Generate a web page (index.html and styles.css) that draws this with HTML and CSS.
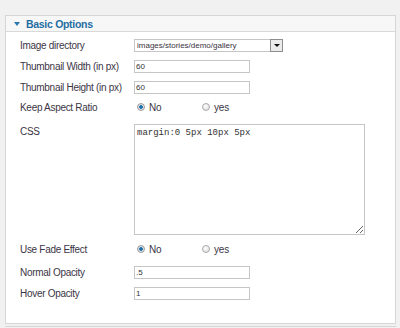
FILE: index.html
```html
<!DOCTYPE html>
<html lang="en">
<head>
    <meta charset="UTF-8">
    <title>Basic Options</title>
    <link rel="stylesheet" href="styles.css">
</head>
<body>
    <div class="panel">
        <div class="panel-head">
            <span class="arrow"></span>
            <h3>Basic Options</h3>
        </div>
        <div class="panel-body">
            <div class="row">
                <label class="key">Image directory</label>
                <div class="select">
                    <span class="select-text">images/stories/demo/gallery</span>
                    <span class="select-btn"><span class="caret"></span></span>
                </div>
            </div>
            <div class="row">
                <label class="key">Thumbnail Width (in px)</label>
                <input class="text" type="text" value="60">
            </div>
            <div class="row short">
                <label class="key">Thumbnail Height (in px)</label>
                <input class="text" type="text" value="60">
            </div>
            <div class="row short">
                <label class="key">Keep Aspect Ratio</label>
                <div class="radios">
                    <span class="option"><span class="radio checked"></span>No</span>
                    <span class="option"><span class="radio"></span>yes</span>
                </div>
            </div>
            <div class="row area-row">
                <label class="key">CSS</label>
                <textarea class="area">margin:0 5px 10px 5px</textarea>
            </div>
            <div class="row short">
                <label class="key">Use Fade Effect</label>
                <div class="radios">
                    <span class="option"><span class="radio checked"></span>No</span>
                    <span class="option"><span class="radio"></span>yes</span>
                </div>
            </div>
            <div class="row spaced">
                <label class="key">Normal Opacity</label>
                <input class="text" type="text" value=".5">
            </div>
            <div class="row">
                <label class="key">Hover Opacity</label>
                <input class="text" type="text" value="1">
            </div>
        </div>
    </div>
    <div class="panel next"></div>
</body>
</html>
```

FILE: styles.css
```css
body {
    margin: 0;
    background-color: #f1f1f1;
    font-family: "Liberation Sans", Arial, sans-serif;
    height: 328px;
    overflow: hidden;
}
.panel {
    margin: 15px 4px 0 5px;
    border: 1px solid #d6d6d6;
    background-color: #fff;
}
.panel.next {
    margin-top: 2px;
    height: 0;
    border-bottom: none;
}
.panel-head {
    display: flex;
    align-items: center;
    height: 15px;
    padding-left: 8px;
    background-color: #f7f7f7;
    border-bottom: 1px solid #d9d9d9;
}
.arrow {
    width: 0;
    height: 0;
    border-left: 3px solid transparent;
    border-right: 3px solid transparent;
    border-top: 4px solid #2a78ad;
    margin-right: 6px;
    margin-top: 1px;
}
.panel-head h3 {
    margin: 0;
    font-size: 10.5px;
    letter-spacing: -0.3px;
    color: #1f6ea3;
    font-weight: bold;
}
.panel-body {
    padding: 3px 14px 19px 14px;
}
.row {
    display: flex;
    align-items: center;
    height: 21px;
}
.row.short {
    height: 20px;
}
.row.spaced {
    margin-top: 3px;
}
.key {
    width: 114px;
    flex: none;
    font-size: 10px;
    letter-spacing: -0.3px;
    color: #3b3545;
}
.text {
    box-sizing: border-box;
    width: 116px;
    height: 13px;
    margin: 0;
    padding: 0 1px;
    border: 1px solid #c6c6c6;
    font-family: "Liberation Sans", Arial, sans-serif;
    font-size: 8px;
    color: #333;
    outline: none;
}
.select {
    box-sizing: border-box;
    display: flex;
    align-items: center;
    width: 149px;
    height: 13px;
    border: 1px solid #c6c6c6;
    background-color: #fff;
}
.select-text {
    flex: 1;
    padding-left: 2px;
    font-size: 8px;
    color: #3a3340;
}
.select-btn {
    box-sizing: border-box;
    display: flex;
    align-items: center;
    justify-content: center;
    width: 13px;
    height: 13px;
    margin: -1px -1px 0 0;
    border: 1px solid #8e8e8e;
    background-color: #ebebeb;
}
.caret {
    width: 0;
    height: 0;
    border-left: 3px solid transparent;
    border-right: 3px solid transparent;
    border-top: 3px solid #111;
    margin-top: 1px;
}
.radios {
    display: flex;
    align-items: center;
    padding-left: 3px;
}
.option {
    display: flex;
    align-items: center;
    width: 65px;
    font-size: 10px;
    letter-spacing: -0.2px;
    color: #3b3545;
}
.radio {
    box-sizing: border-box;
    display: inline-block;
    width: 8px;
    height: 8px;
    margin-right: 4px;
    border-radius: 50%;
    border: 1px solid #a9a9a9;
    background: radial-gradient(circle at 40% 35%, #fff, #d8d8d8);
}
.radio.checked {
    background: radial-gradient(circle, #1a5f93 0, #2f7fb8 1.6px, #e8e8e8 2.2px, #cfcfcf 4px);
    border-color: #9c9c9c;
}
.row.area-row {
    height: auto;
    align-items: flex-start;
    padding: 7px 0 4px 0;
}
.area-row .key {
    margin-top: 2px;
}
.area {
    box-sizing: border-box;
    width: 231px;
    height: 111px;
    margin: 0;
    padding: 3px 2px;
    border: 1px solid #c6c6c6;
    font-family: "Liberation Mono", "Courier New", monospace;
    font-size: 9px;
    color: #333;
    outline: none;
}
```
